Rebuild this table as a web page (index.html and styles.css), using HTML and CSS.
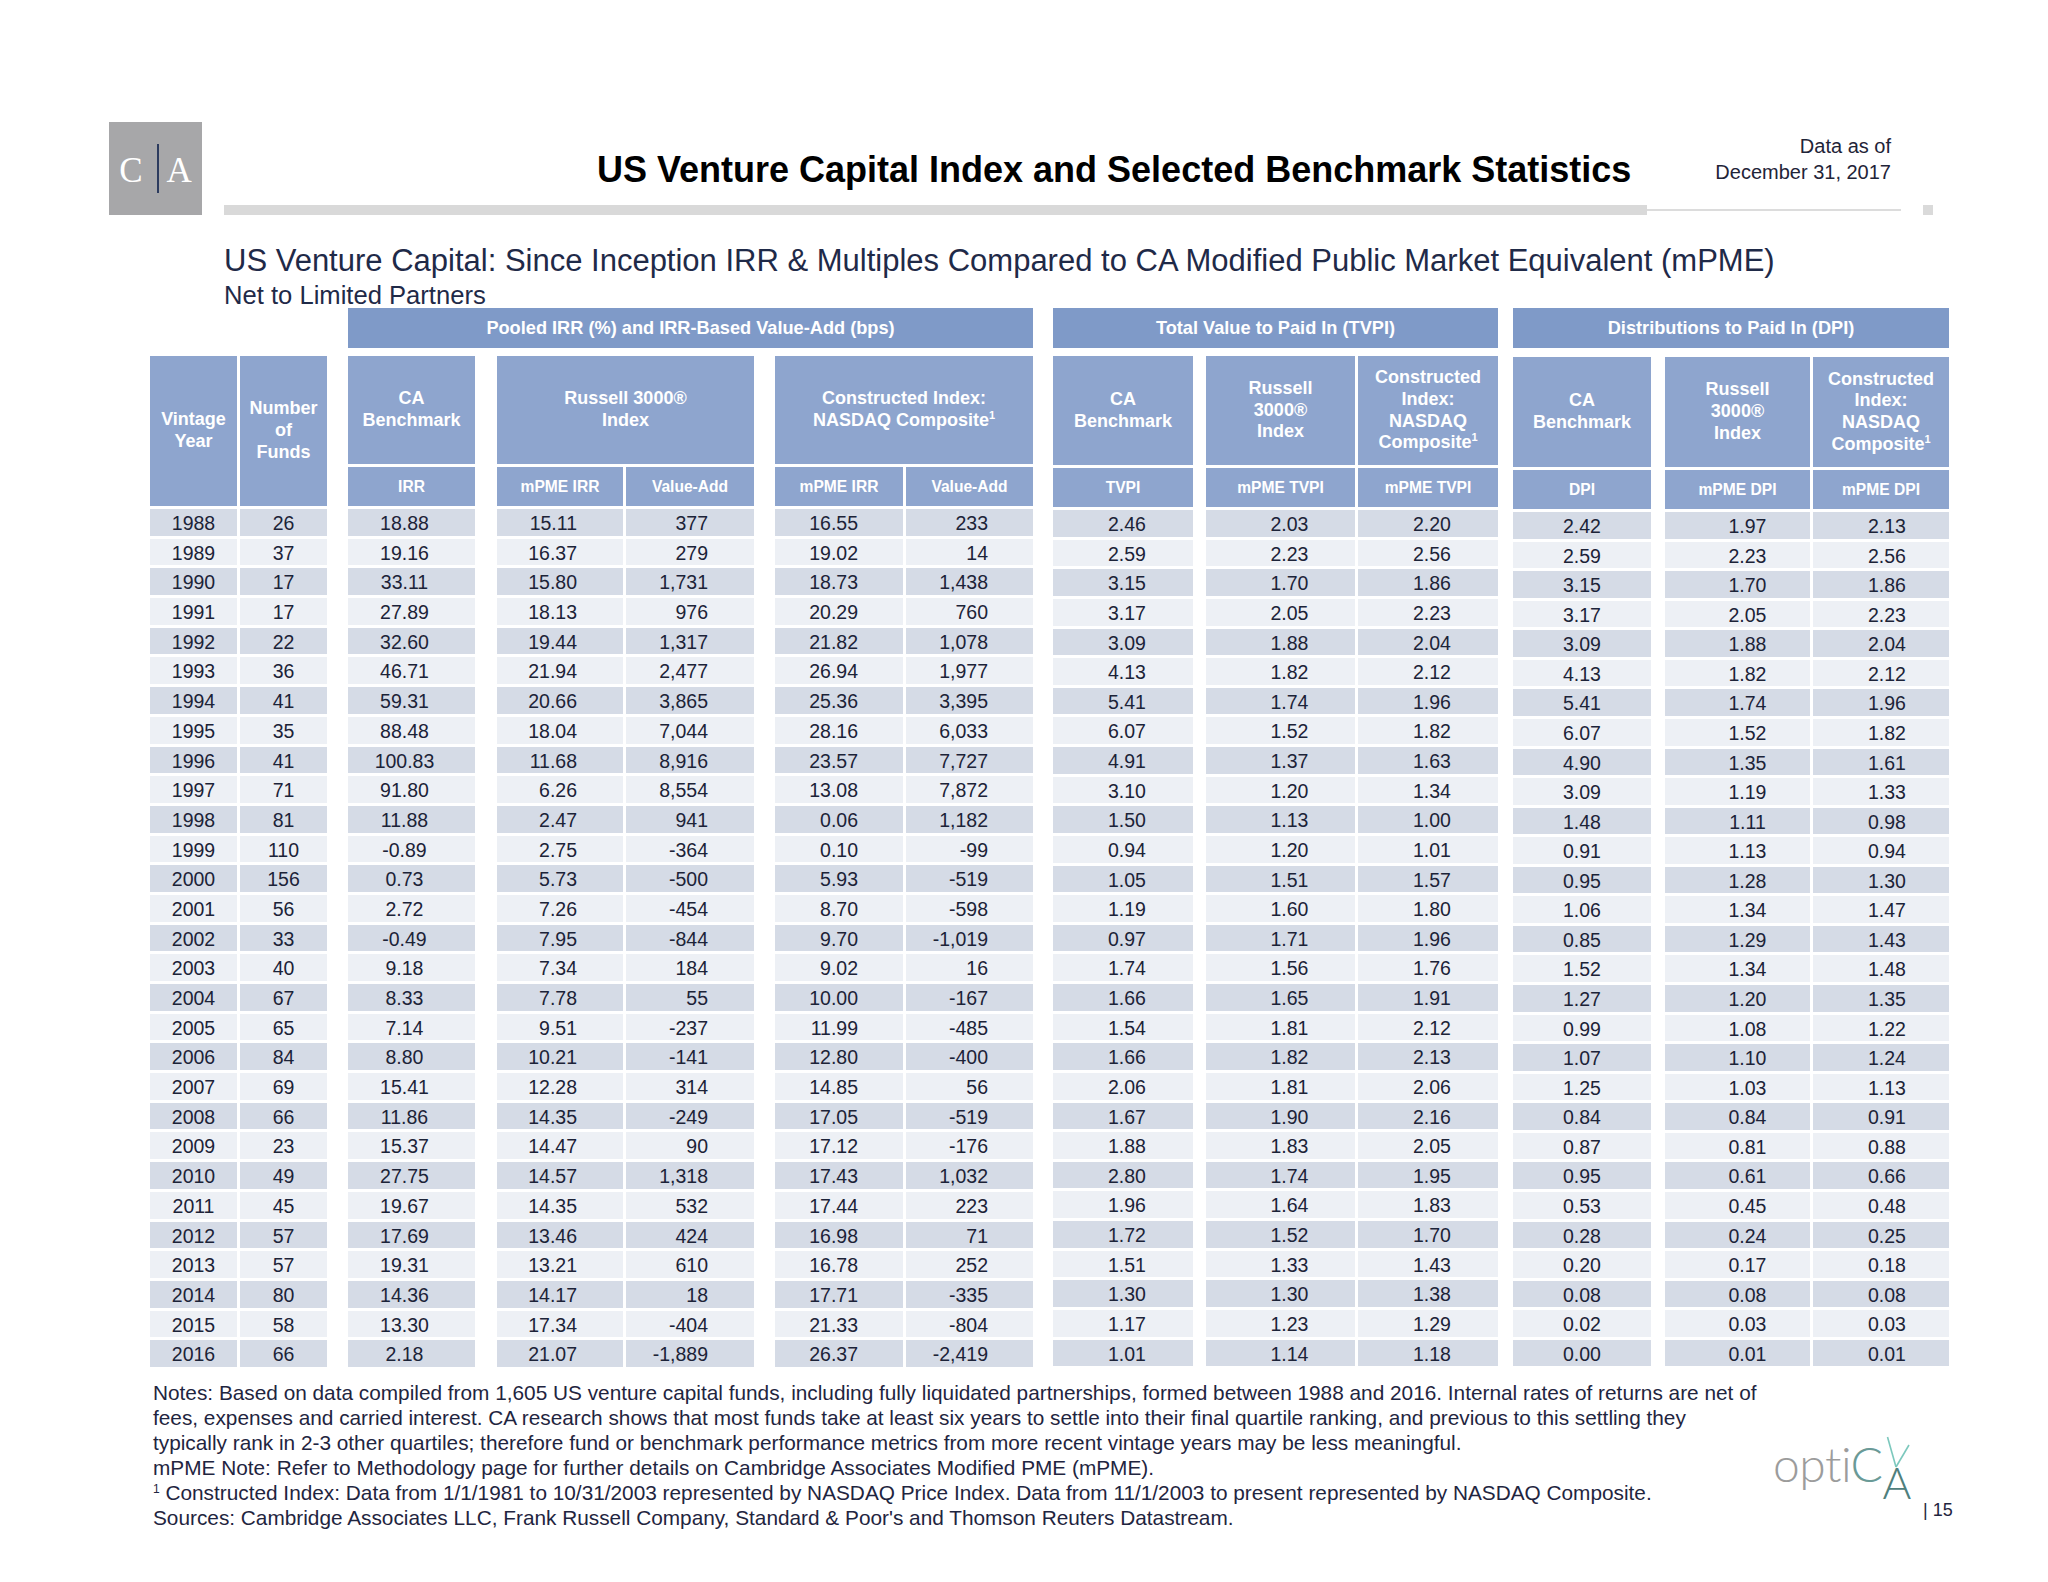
FILE: index.html
```html
<!DOCTYPE html>
<html lang="en">
<head>
<meta charset="utf-8">
<title>US Venture Capital Index and Selected Benchmark Statistics</title>
<link rel="stylesheet" href="styles.css">
</head>
<body>
<header class="hdr">
  <div class="calogo"><span class="lc">C</span><span class="bar"></span><span class="la">A</span></div>
  <div class="hright">
    <div class="titlerow">
      <h1 class="title">US Venture Capital Index and Selected Benchmark Statistics</h1>
      <div class="asof">Data as of<br>December 31, 2017</div>
    </div>
    <div class="rule"><span class="thick"></span><span class="thin"></span><span class="sq"></span></div>
  </div>
</header>
<h2 class="sub1">US Venture Capital: Since Inception IRR &amp; Multiples Compared to CA Modified Public Market Equivalent (mPME)</h2>
<div class="sub2">Net to Limited Partners</div>

<div class="tables">
  <div class="blk a">
    <div class="hd">
      <div class="g ga">Pooled IRR (%) and IRR-Based Value-Add (bps)</div>
      <div class="h vy"><span>Vintage<br>Year</span></div>
      <div class="h nf"><span>Number<br>of<br>Funds</span></div>
      <div class="h ca"><span>CA<br>Benchmark</span></div>
      <div class="h ru"><span>Russell 3000®<br>Index</span></div>
      <div class="h na"><span>Constructed Index:<br>NASDAQ Composite<sup>1</sup></span></div>
      <div class="h s s1">IRR</div>
      <div class="h s s2">mPME IRR</div>
      <div class="h s s3">Value-Add</div>
      <div class="h s s4">mPME IRR</div>
      <div class="h s s5">Value-Add</div>
    </div>
    <div class="tr d"><span>1988</span><span>26</span><span>18.88</span><span>15.11</span><span>377</span><span>16.55</span><span>233</span></div>
    <div class="tr l"><span>1989</span><span>37</span><span>19.16</span><span>16.37</span><span>279</span><span>19.02</span><span>14</span></div>
    <div class="tr d"><span>1990</span><span>17</span><span>33.11</span><span>15.80</span><span>1,731</span><span>18.73</span><span>1,438</span></div>
    <div class="tr l"><span>1991</span><span>17</span><span>27.89</span><span>18.13</span><span>976</span><span>20.29</span><span>760</span></div>
    <div class="tr d"><span>1992</span><span>22</span><span>32.60</span><span>19.44</span><span>1,317</span><span>21.82</span><span>1,078</span></div>
    <div class="tr l"><span>1993</span><span>36</span><span>46.71</span><span>21.94</span><span>2,477</span><span>26.94</span><span>1,977</span></div>
    <div class="tr d"><span>1994</span><span>41</span><span>59.31</span><span>20.66</span><span>3,865</span><span>25.36</span><span>3,395</span></div>
    <div class="tr l"><span>1995</span><span>35</span><span>88.48</span><span>18.04</span><span>7,044</span><span>28.16</span><span>6,033</span></div>
    <div class="tr d"><span>1996</span><span>41</span><span>100.83</span><span>11.68</span><span>8,916</span><span>23.57</span><span>7,727</span></div>
    <div class="tr l"><span>1997</span><span>71</span><span>91.80</span><span>6.26</span><span>8,554</span><span>13.08</span><span>7,872</span></div>
    <div class="tr d"><span>1998</span><span>81</span><span>11.88</span><span>2.47</span><span>941</span><span>0.06</span><span>1,182</span></div>
    <div class="tr l"><span>1999</span><span>110</span><span>-0.89</span><span>2.75</span><span>-364</span><span>0.10</span><span>-99</span></div>
    <div class="tr d"><span>2000</span><span>156</span><span>0.73</span><span>5.73</span><span>-500</span><span>5.93</span><span>-519</span></div>
    <div class="tr l"><span>2001</span><span>56</span><span>2.72</span><span>7.26</span><span>-454</span><span>8.70</span><span>-598</span></div>
    <div class="tr d"><span>2002</span><span>33</span><span>-0.49</span><span>7.95</span><span>-844</span><span>9.70</span><span>-1,019</span></div>
    <div class="tr l"><span>2003</span><span>40</span><span>9.18</span><span>7.34</span><span>184</span><span>9.02</span><span>16</span></div>
    <div class="tr d"><span>2004</span><span>67</span><span>8.33</span><span>7.78</span><span>55</span><span>10.00</span><span>-167</span></div>
    <div class="tr l"><span>2005</span><span>65</span><span>7.14</span><span>9.51</span><span>-237</span><span>11.99</span><span>-485</span></div>
    <div class="tr d"><span>2006</span><span>84</span><span>8.80</span><span>10.21</span><span>-141</span><span>12.80</span><span>-400</span></div>
    <div class="tr l"><span>2007</span><span>69</span><span>15.41</span><span>12.28</span><span>314</span><span>14.85</span><span>56</span></div>
    <div class="tr d"><span>2008</span><span>66</span><span>11.86</span><span>14.35</span><span>-249</span><span>17.05</span><span>-519</span></div>
    <div class="tr l"><span>2009</span><span>23</span><span>15.37</span><span>14.47</span><span>90</span><span>17.12</span><span>-176</span></div>
    <div class="tr d"><span>2010</span><span>49</span><span>27.75</span><span>14.57</span><span>1,318</span><span>17.43</span><span>1,032</span></div>
    <div class="tr l"><span>2011</span><span>45</span><span>19.67</span><span>14.35</span><span>532</span><span>17.44</span><span>223</span></div>
    <div class="tr d"><span>2012</span><span>57</span><span>17.69</span><span>13.46</span><span>424</span><span>16.98</span><span>71</span></div>
    <div class="tr l"><span>2013</span><span>57</span><span>19.31</span><span>13.21</span><span>610</span><span>16.78</span><span>252</span></div>
    <div class="tr d"><span>2014</span><span>80</span><span>14.36</span><span>14.17</span><span>18</span><span>17.71</span><span>-335</span></div>
    <div class="tr l"><span>2015</span><span>58</span><span>13.30</span><span>17.34</span><span>-404</span><span>21.33</span><span>-804</span></div>
    <div class="tr d"><span>2016</span><span>66</span><span>2.18</span><span>21.07</span><span>-1,889</span><span>26.37</span><span>-2,419</span></div>
  </div>

  <div class="blk b">
    <div class="hd">
      <div class="g gb">Total Value to Paid In (TVPI)</div>
      <div class="h h1"><span>CA<br>Benchmark</span></div>
      <div class="h h2"><span>Russell<br>3000®<br>Index</span></div>
      <div class="h h3"><span>Constructed<br>Index:<br>NASDAQ<br>Composite<sup>1</sup></span></div>
      <div class="h s t1">TVPI</div>
      <div class="h s t2">mPME TVPI</div>
      <div class="h s t3">mPME TVPI</div>
    </div>
    <div class="tr d"><span>2.46</span><span>2.03</span><span>2.20</span></div>
    <div class="tr l"><span>2.59</span><span>2.23</span><span>2.56</span></div>
    <div class="tr d"><span>3.15</span><span>1.70</span><span>1.86</span></div>
    <div class="tr l"><span>3.17</span><span>2.05</span><span>2.23</span></div>
    <div class="tr d"><span>3.09</span><span>1.88</span><span>2.04</span></div>
    <div class="tr l"><span>4.13</span><span>1.82</span><span>2.12</span></div>
    <div class="tr d"><span>5.41</span><span>1.74</span><span>1.96</span></div>
    <div class="tr l"><span>6.07</span><span>1.52</span><span>1.82</span></div>
    <div class="tr d"><span>4.91</span><span>1.37</span><span>1.63</span></div>
    <div class="tr l"><span>3.10</span><span>1.20</span><span>1.34</span></div>
    <div class="tr d"><span>1.50</span><span>1.13</span><span>1.00</span></div>
    <div class="tr l"><span>0.94</span><span>1.20</span><span>1.01</span></div>
    <div class="tr d"><span>1.05</span><span>1.51</span><span>1.57</span></div>
    <div class="tr l"><span>1.19</span><span>1.60</span><span>1.80</span></div>
    <div class="tr d"><span>0.97</span><span>1.71</span><span>1.96</span></div>
    <div class="tr l"><span>1.74</span><span>1.56</span><span>1.76</span></div>
    <div class="tr d"><span>1.66</span><span>1.65</span><span>1.91</span></div>
    <div class="tr l"><span>1.54</span><span>1.81</span><span>2.12</span></div>
    <div class="tr d"><span>1.66</span><span>1.82</span><span>2.13</span></div>
    <div class="tr l"><span>2.06</span><span>1.81</span><span>2.06</span></div>
    <div class="tr d"><span>1.67</span><span>1.90</span><span>2.16</span></div>
    <div class="tr l"><span>1.88</span><span>1.83</span><span>2.05</span></div>
    <div class="tr d"><span>2.80</span><span>1.74</span><span>1.95</span></div>
    <div class="tr l"><span>1.96</span><span>1.64</span><span>1.83</span></div>
    <div class="tr d"><span>1.72</span><span>1.52</span><span>1.70</span></div>
    <div class="tr l"><span>1.51</span><span>1.33</span><span>1.43</span></div>
    <div class="tr d"><span>1.30</span><span>1.30</span><span>1.38</span></div>
    <div class="tr l"><span>1.17</span><span>1.23</span><span>1.29</span></div>
    <div class="tr d"><span>1.01</span><span>1.14</span><span>1.18</span></div>
  </div>

  <div class="blk c">
    <div class="hd">
      <div class="g gc">Distributions to Paid In (DPI)</div>
      <div class="h h1"><span>CA<br>Benchmark</span></div>
      <div class="h h2"><span>Russell<br>3000®<br>Index</span></div>
      <div class="h h3"><span>Constructed<br>Index:<br>NASDAQ<br>Composite<sup>1</sup></span></div>
      <div class="h s t1">DPI</div>
      <div class="h s t2">mPME DPI</div>
      <div class="h s t3">mPME DPI</div>
    </div>
    <div class="tr d"><span>2.42</span><span>1.97</span><span>2.13</span></div>
    <div class="tr l"><span>2.59</span><span>2.23</span><span>2.56</span></div>
    <div class="tr d"><span>3.15</span><span>1.70</span><span>1.86</span></div>
    <div class="tr l"><span>3.17</span><span>2.05</span><span>2.23</span></div>
    <div class="tr d"><span>3.09</span><span>1.88</span><span>2.04</span></div>
    <div class="tr l"><span>4.13</span><span>1.82</span><span>2.12</span></div>
    <div class="tr d"><span>5.41</span><span>1.74</span><span>1.96</span></div>
    <div class="tr l"><span>6.07</span><span>1.52</span><span>1.82</span></div>
    <div class="tr d"><span>4.90</span><span>1.35</span><span>1.61</span></div>
    <div class="tr l"><span>3.09</span><span>1.19</span><span>1.33</span></div>
    <div class="tr d"><span>1.48</span><span>1.11</span><span>0.98</span></div>
    <div class="tr l"><span>0.91</span><span>1.13</span><span>0.94</span></div>
    <div class="tr d"><span>0.95</span><span>1.28</span><span>1.30</span></div>
    <div class="tr l"><span>1.06</span><span>1.34</span><span>1.47</span></div>
    <div class="tr d"><span>0.85</span><span>1.29</span><span>1.43</span></div>
    <div class="tr l"><span>1.52</span><span>1.34</span><span>1.48</span></div>
    <div class="tr d"><span>1.27</span><span>1.20</span><span>1.35</span></div>
    <div class="tr l"><span>0.99</span><span>1.08</span><span>1.22</span></div>
    <div class="tr d"><span>1.07</span><span>1.10</span><span>1.24</span></div>
    <div class="tr l"><span>1.25</span><span>1.03</span><span>1.13</span></div>
    <div class="tr d"><span>0.84</span><span>0.84</span><span>0.91</span></div>
    <div class="tr l"><span>0.87</span><span>0.81</span><span>0.88</span></div>
    <div class="tr d"><span>0.95</span><span>0.61</span><span>0.66</span></div>
    <div class="tr l"><span>0.53</span><span>0.45</span><span>0.48</span></div>
    <div class="tr d"><span>0.28</span><span>0.24</span><span>0.25</span></div>
    <div class="tr l"><span>0.20</span><span>0.17</span><span>0.18</span></div>
    <div class="tr d"><span>0.08</span><span>0.08</span><span>0.08</span></div>
    <div class="tr l"><span>0.02</span><span>0.03</span><span>0.03</span></div>
    <div class="tr d"><span>0.00</span><span>0.01</span><span>0.01</span></div>
  </div>
</div>

<footer class="foot">
  <div class="notes">Notes: Based on data compiled from 1,605 US venture capital funds, including fully liquidated partnerships, formed between 1988 and 2016. Internal rates of returns are net of<br>fees, expenses and carried interest. CA research shows that most funds take at least six years to settle into their final quartile ranking, and previous to this settling they<br>typically rank in 2-3 other quartiles; therefore fund or benchmark performance metrics from more recent vintage years may be less meaningful.<br>mPME Note: Refer to Methodology page for further details on Cambridge Associates Modified PME (mPME).<br><sup>1</sup> Constructed Index: Data from 1/1/1981 to 10/31/2003 represented by NASDAQ Price Index. Data from 11/1/2003 to present represented by NASDAQ Composite.<br>Sources: Cambridge Associates LLC, Frank Russell Company, Standard &amp; Poor's and Thomson Reuters Datastream.</div>
  <svg class="optica" width="150" height="85" viewBox="0 0 150 85" aria-label="optica">
    <text class="opt" x="3" y="50"><tspan fill="#9c9c9c">opti</tspan><tspan fill="#6a9a97">C</tspan><tspan class="optA" dy="17">A</tspan></text>
    <line x1="126" y1="35" x2="117.5" y2="5" stroke="#7cc8bd" stroke-width="1.6"/>
    <line x1="126" y1="35" x2="139" y2="13" stroke="#7cc8bd" stroke-width="1.6"/>
  </svg>
  <div class="pg">| 15</div>
</footer>
</body>
</html>
```

FILE: styles.css
```css
* { box-sizing: border-box; margin: 0; padding: 0; }

body {
  margin: 0;
  width: 2048px;
  height: 1582px;
  overflow: hidden;
  background: #ffffff;
  font-family: "Liberation Sans", Arial, sans-serif;
  color: #1e2432;
}

/* ---------- header ---------- */
.hdr {
  display: flex;
  padding: 122px 0 0 109px;
}
.calogo {
  width: 93px;
  height: 93px;
  background: #a7a7a9;
  display: flex;
  align-items: center;
  justify-content: center;
  font-family: "Liberation Serif", "Times New Roman", serif;
  font-size: 35px;
  color: #ffffff;
  line-height: 1;
}
.calogo .lc { margin-top: 4px; }
.calogo .la { margin-top: 4px; }
.calogo .bar {
  width: 2px;
  height: 49px;
  background: #2c3b5e;
  margin: 0 8px 0 14px;
}
.hright {
  margin-left: 22px;
  width: 1709px;
  height: 93px;
  display: flex;
  flex-direction: column;
  justify-content: flex-end;
}
.titlerow {
  display: flex;
  justify-content: flex-end;
  align-items: flex-end;
}
.title {
  font-size: 36px;
  font-weight: bold;
  line-height: 40px;
  color: #000000;
}
.asof {
  font-size: 20px;
  line-height: 26px;
  text-align: right;
  margin: 0 42px 5px 84px;
  color: #1f2438;
}
.rule {
  display: flex;
  align-items: center;
  height: 10px;
  margin-top: 15px;
}
.rule .thick { width: 1423px; height: 10px; background: #d9d9d9; }
.rule .thin { width: 254px; height: 2px; background: #dcdcdc; }
.rule .sq { width: 10px; height: 10px; margin-left: 22px; background: #dadada; }

.sub1 {
  margin: 29px 0 0 224px;
  font-size: 31px;
  font-weight: normal;
  line-height: 34px;
  color: #1f2a48;
}
.sub2 {
  margin: 4px 0 0 224px;
  font-size: 25.6px;
  line-height: 26px;
  color: #1f2a48;
}

/* ---------- tables ---------- */
.tables {
  display: flex;
  align-items: flex-start;
  margin-left: 150px;
}
.blk {
  display: flex;
  flex-direction: column;
  gap: 3px;
}
.blk.b { margin-left: 20px; }
.blk.c { margin-left: 15px; }

.hd, .tr {
  display: grid;
  column-gap: 3px;
}
.hd { row-gap: 3px; }

.a .hd, .a .tr { grid-template-columns: 87px 87px 15px 127px 16px 126px 128px 15px 128px 127px; }
.a .hd { grid-template-rows: 40px 2px 108px 39px; }
.a .tr { height: 26.7px; }

.b .hd, .b .tr { grid-template-columns: 140px 7px 149px 140px; }
.b .hd { grid-template-rows: 40px 2px 109px 39px; }
.b .tr { height: 26.64px; }

.c .hd, .c .tr { grid-template-columns: 138px 8px 145px 136px; }
.c .hd { grid-template-rows: 40px 3px 110px 39px; }
.c .tr { height: 26.57px; }

.g {
  grid-row: 1;
  background: #7f9ac8;
  color: #ffffff;
  font-weight: bold;
  font-size: 18.2px;
  display: flex;
  align-items: center;
  justify-content: center;
}
.ga { grid-column: 4 / 11; }
.gb { grid-column: 1 / 5; }
.gc { grid-column: 1 / 5; }

.h {
  background: #8ea5ce;
  color: #ffffff;
  font-weight: bold;
  font-size: 18px;
  line-height: 21.7px;
  display: flex;
  align-items: center;
  justify-content: center;
  text-align: center;
}
.h.s { font-size: 15.6px; grid-row: 4; }
.h sup { font-size: 11px; line-height: 0; vertical-align: 7px; }

.a .vy { grid-column: 1; grid-row: 3 / 5; }
.a .nf { grid-column: 2; grid-row: 3 / 5; }
.a .ca { grid-column: 4; grid-row: 3; }
.a .ru { grid-column: 6 / 8; grid-row: 3; }
.a .na { grid-column: 9 / 11; grid-row: 3; }
.a .s1 { grid-column: 4; }
.a .s2 { grid-column: 6; }
.a .s3 { grid-column: 7; }
.a .s4 { grid-column: 9; }
.a .s5 { grid-column: 10; }

.b .h1, .c .h1 { grid-column: 1; grid-row: 3; }
.b .h2, .c .h2 { grid-column: 3; grid-row: 3; }
.b .h3, .c .h3 { grid-column: 4; grid-row: 3; }
.b .t1, .c .t1 { grid-column: 1; }
.b .t2, .c .t2 { grid-column: 3; }
.b .t3, .c .t3 { grid-column: 4; }

.tr > span {
  display: block;
  font-size: 19.5px;
  line-height: 29px;
  text-align: center;
  white-space: nowrap;
  overflow: hidden;
  color: #1c2338;
}
.tr.d > span { background: #d5dbe6; }
.tr.l > span { background: #edf0f5; }

.a .tr > :nth-child(3) { grid-column: 4; padding-right: 14px; }
.a .tr > :nth-child(4) { grid-column: 6; text-align: right; padding-right: 46px; }
.a .tr > :nth-child(5) { grid-column: 7; text-align: right; padding-right: 46px; }
.a .tr > :nth-child(6) { grid-column: 9; text-align: right; padding-right: 45px; }
.a .tr > :nth-child(7) { grid-column: 10; text-align: right; padding-right: 45px; }

.b .tr > :nth-child(1) { padding-left: 8px; }
.b .tr > :nth-child(2) { grid-column: 3; padding-left: 18px; }
.b .tr > :nth-child(3) { grid-column: 4; padding-left: 8px; }

.c .tr > :nth-child(2) { grid-column: 3; padding-left: 20px; }
.c .tr > :nth-child(3) { grid-column: 4; padding-left: 12px; }

/* ---------- footer ---------- */
.foot {
  display: flex;
  align-items: flex-start;
  margin-top: 13px;
  padding-left: 153px;
}
.notes {
  width: 1617px;
  flex: none;
  font-size: 20.8px;
  line-height: 25px;
  color: #1f2540;
  white-space: nowrap;
}
.notes sup { font-size: 12px; line-height: 0; vertical-align: 7px; }
.optica {
  flex: none;
  margin-top: 52px;
}
.opt {
  font-family: Lato, "Open Sans", sans-serif;
  font-weight: 300;
  font-size: 48px;
  letter-spacing: -0.5px;
}
.optA {
  font-size: 44px;
  fill: #4f807d;
}
.pg {
  margin: 120px 0 0 3px;
  font-size: 18px;
  line-height: 20px;
  color: #1f2540;
  white-space: nowrap;
}
```
